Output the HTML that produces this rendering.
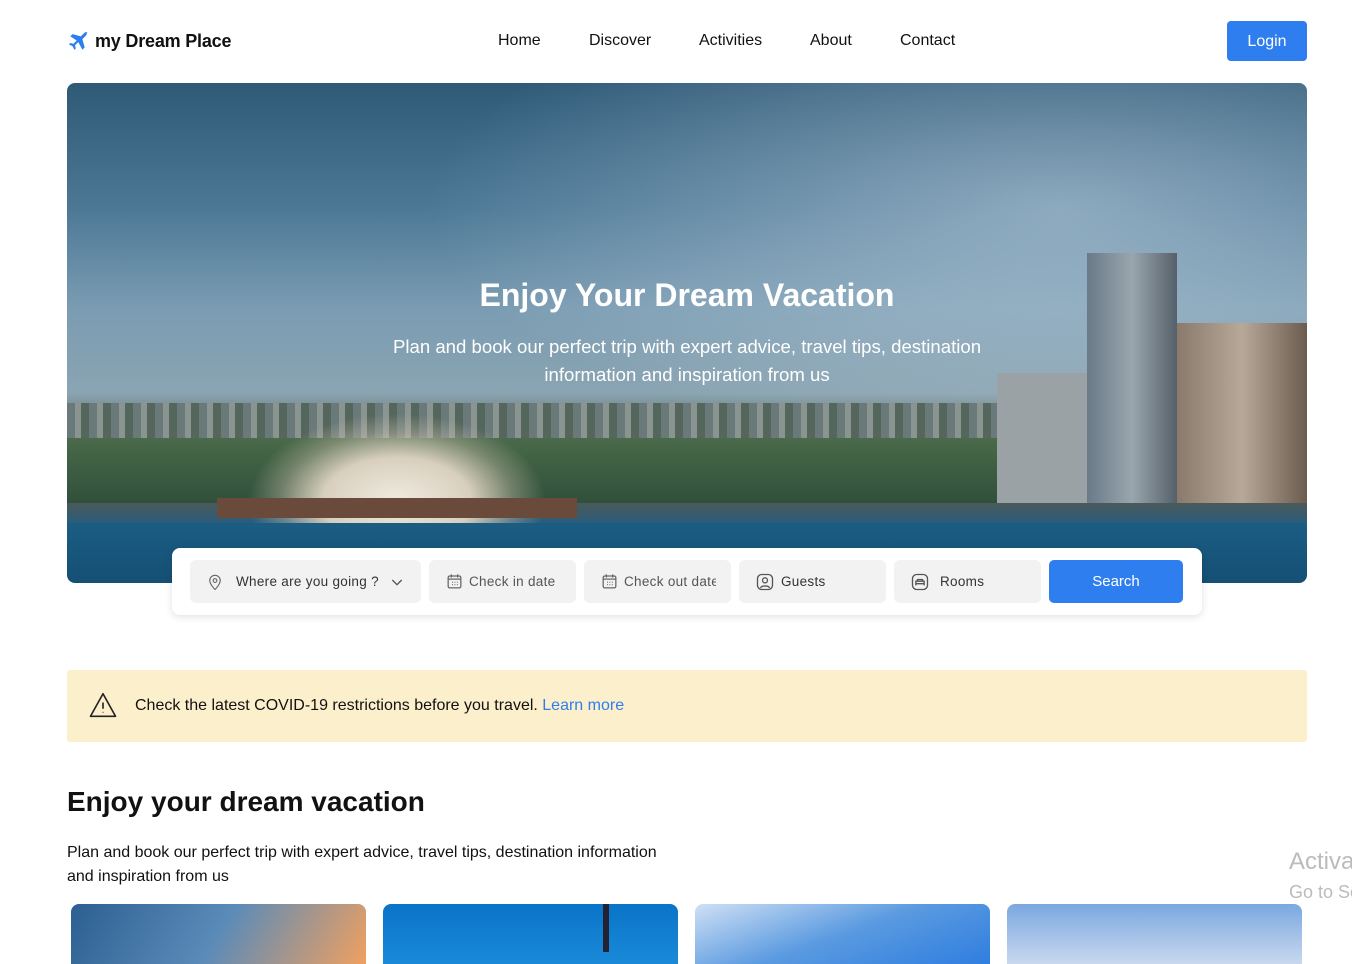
<!DOCTYPE html>
<html><head><meta charset="utf-8"><style>
*{margin:0;padding:0;box-sizing:border-box}
body{width:1352px;height:952px;overflow:hidden;background:#fff;font-family:"Liberation Sans",sans-serif;color:#111;position:relative}
.abs{position:absolute}
.nav a{position:absolute;top:32px;font-size:16px;color:#111;text-decoration:none}
.hero{left:67px;top:83px;width:1240px;height:500px;border-radius:8px;overflow:hidden;
background:linear-gradient(180deg,#2e5a78 0%,#4c7896 25%,#7a9cb2 45%,#8aa4b2 62%,#6a7a70 68%,#3c5a48 76%,#2a5a6e 82%,#1c5f86 86%,#154f74 100%)}
.field{position:absolute;top:560px;height:43px;background:#f2f2f2;border-radius:6px;font-size:13.5px;color:#555;display:flex;align-items:center;letter-spacing:.3px}
.field svg{margin:0 8px 0 16px}
.card{position:absolute;top:904px;width:295px;height:60px;border-radius:8px 8px 0 0}
</style></head><body>
<div class="abs" style="left:68px;top:30px;display:flex;align-items:center">
<svg width="22" height="22" viewBox="0 0 24 24"><path fill="#2f7ef0" d="M21.5 2.5c-1-1-3 0-4.2 1.2L14 7 5 4.5 2.5 7l7 4.5-3.5 3.5-3.5-.8L1 15.7l4 2 2 4 1.5-1.5-.8-3.5 3.5-3.5L15.7 21.5 18.2 19l-2.5-9 3.3-3.3c1.2-1.2 2.2-3.2 1.2-4.2z"/></svg>
<span style="font-size:18px;margin-left:5px;font-weight:700;letter-spacing:-.2px">my Dream Place</span></div>
<div class="nav"><a style="left:498px">Home</a><a style="left:589px">Discover</a><a style="left:699px">Activities</a><a style="left:810px">About</a><a style="left:900px">Contact</a></div>
<div class="abs" style="left:1227px;top:21px;width:80px;height:40px;background:#2f7ef0;border-radius:4px;color:#fff;font-size:16px;text-align:center;line-height:42px">Login</div>
<div class="abs hero">
<div class="abs" style="left:0;top:0;width:1240px;height:500px;background:radial-gradient(ellipse at 80% 25%,rgba(220,230,240,.45),transparent 45%)"></div>
<div class="abs" style="left:0;top:320px;width:1240px;height:60px;background:repeating-linear-gradient(90deg,#6a7a7a 0 8px,#8a9490 8px 14px,#55665c 14px 22px)"></div>
<div class="abs" style="left:0;top:355px;width:1240px;height:70px;background:linear-gradient(180deg,#4a6a4a,#2e4e3a)"></div>
<div class="abs" style="left:0;top:420px;width:1240px;height:20px;background:linear-gradient(180deg,#4a5a5a,#2a5c7c)"></div>
<div class="abs" style="left:1020px;top:170px;width:90px;height:250px;background:linear-gradient(90deg,#6a7a88,#9aa6ae,#55606a)"></div>
<div class="abs" style="left:1110px;top:240px;width:130px;height:180px;background:linear-gradient(90deg,#8a7a6c,#b8a898,#6c5c50)"></div>
<div class="abs" style="left:930px;top:290px;width:90px;height:130px;background:#9aa2a6"></div>
<div class="abs" style="left:180px;top:330px;width:300px;height:110px;background:radial-gradient(ellipse at 50% 80%,#f0ebe0 0,#d8cfbe 35%,rgba(200,190,170,.4) 55%,transparent 70%)"></div>
<div class="abs" style="left:150px;top:415px;width:360px;height:20px;background:#6a4a3a"></div>
<div style="position:absolute;left:0;top:194px;width:1240px;text-align:center;color:#fff;font-size:32px;font-weight:700">Enjoy Your Dream Vacation</div>
<div style="position:absolute;left:290px;top:250px;width:660px;text-align:center;color:#fff;font-size:18.6px;line-height:28px">Plan and book our perfect trip with expert advice, travel tips, destination information and inspiration from us</div>
</div>
<div class="abs" style="left:172px;top:548px;width:1030px;height:67px;background:#fff;border-radius:8px;box-shadow:0 2px 8px rgba(0,0,0,.12)"></div>
<div class="field" style="left:190px;width:231px;color:#333"><svg width="18" height="18" viewBox="0 0 24 24" fill="none" stroke="#666" stroke-width="1.5"><path d="M12 22s7-7 7-12a7 7 0 0 0-14 0c0 5 7 12 7 12z"/><circle cx="12" cy="10" r="2.5"/></svg><span style="margin-left:4px">Where are you going ?</span><svg width="16" height="16" viewBox="0 0 24 24" fill="none" stroke="#555" stroke-width="2" style="margin-left:10px"><path d="M5 9l7 7 7-7"/></svg></div>
<div class="field" style="left:429px;width:147px"><svg width="19" height="19" viewBox="0 0 24 24" fill="none" stroke="#666" stroke-width="1.6" style="margin-right:5px"><rect x="4" y="5" width="16" height="15" rx="2"/><path d="M4 9h16M8 3v4M16 3v4M9 13h1M12 13h1M15 13h1M9 16h1M12 16h1M15 16h1"/></svg>Check in date</div>
<div class="field" style="left:584px;width:147px;overflow:hidden"><svg width="19" height="19" viewBox="0 0 24 24" fill="none" stroke="#666" stroke-width="1.6" style="margin-right:5px;flex:none"><rect x="4" y="5" width="16" height="15" rx="2"/><path d="M4 9h16M8 3v4M16 3v4M9 13h1M12 13h1M15 13h1M9 16h1M12 16h1M15 16h1"/></svg><span style="white-space:nowrap;overflow:hidden;width:92px">Check out date</span></div>
<div class="field" style="left:739px;width:147px;color:#333"><svg width="20" height="20" viewBox="0 0 24 24" fill="none" stroke="#555" stroke-width="1.6" style="margin-right:6px"><rect x="3" y="3" width="18" height="18" rx="5"/><circle cx="12" cy="10" r="3"/><path d="M6.5 19c1.5-3 9.5-3 11 0"/></svg>Guests</div>
<div class="field" style="left:894px;width:147px;color:#333"><svg width="20" height="20" viewBox="0 0 24 24" fill="none" stroke="#555" stroke-width="1.6" style="margin-right:10px"><rect x="3" y="3" width="18" height="18" rx="5"/><path d="M7 16v-5h10v5M7 14h10M9 11V9h6v2"/></svg>Rooms</div>
<div class="abs" style="left:1049px;top:560px;width:134px;height:43px;background:#2f7ef0;border-radius:5px;color:#fff;font-size:15px;text-align:center;line-height:43px">Search</div>
<div class="abs" style="left:67px;top:670px;width:1240px;height:72px;background:#fcefcb;border-radius:3px"></div>
<svg class="abs" style="left:88px;top:690px" width="30" height="30" viewBox="0 0 24 24" fill="none" stroke="#222" stroke-width="1.3"><path d="M12 3L2 21h20z" stroke-linejoin="round"/><path d="M12 10v5M12 17.5v.5"/></svg>
<div class="abs" style="left:135px;top:697px;font-size:16px">Check the latest COVID-19 restrictions before you travel. <span style="color:#2f7ef0">Learn more</span></div>
<div class="abs" style="left:67px;top:786px;font-size:28px;font-weight:700">Enjoy your dream vacation</div>
<div class="abs" style="left:67px;top:841px;width:600px;font-size:16px;line-height:24px">Plan and book our perfect trip with expert advice, travel tips, destination information and inspiration from us</div>
<div class="abs" style="left:1289px;top:848px;font-size:24px;color:#bbb;white-space:nowrap">Activa</div>
<div class="abs" style="left:1289px;top:882px;font-size:18px;color:#bbb;white-space:nowrap">Go to Se</div>
<div class="card" style="left:71px;background:linear-gradient(120deg,#2c5f92,#5b8bb8 50%,#f0a060)"></div>
<div class="card" style="left:383px;background:linear-gradient(180deg,#0a74c8,#1a8ad8);"><div class="abs" style="left:220px;top:0;width:6px;height:48px;background:#223"></div></div>
<div class="card" style="left:695px;background:linear-gradient(160deg,#cfe0f5,#5a9ae0 50%,#2f7ee0)"></div>
<div class="card" style="left:1007px;background:linear-gradient(180deg,#7aa8e0,#c8d8ee)"></div>
</body></html>
